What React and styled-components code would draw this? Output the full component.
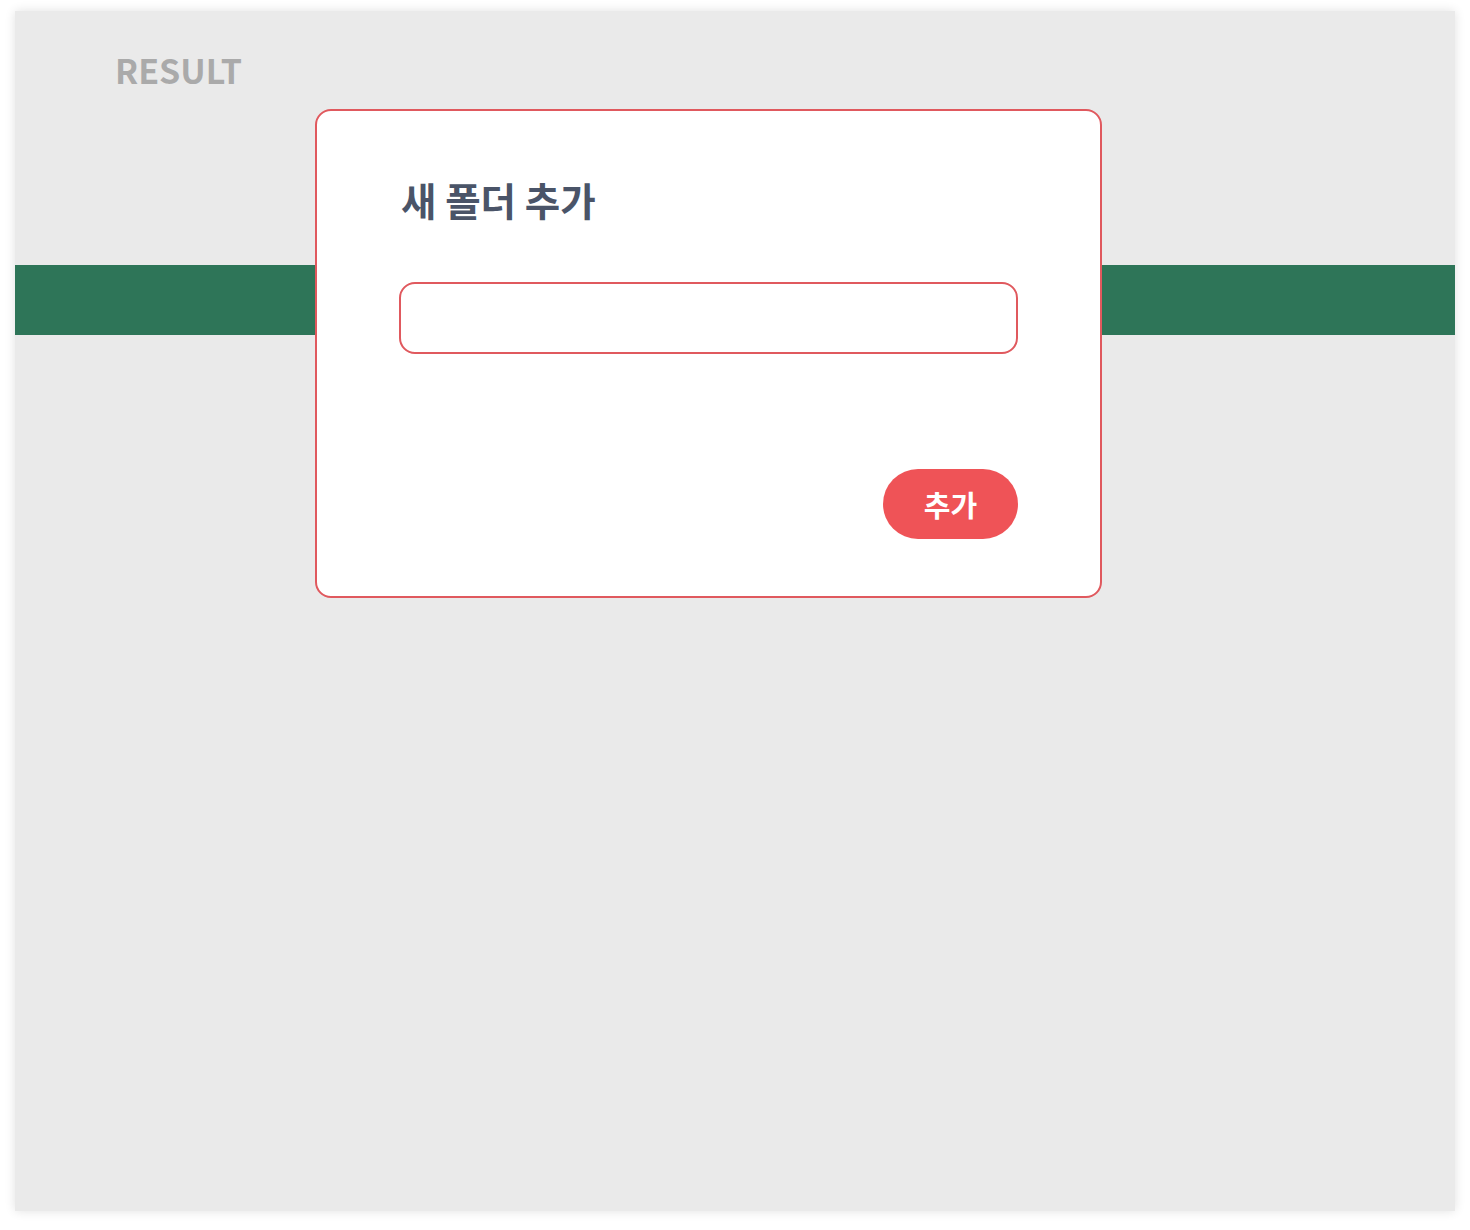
import React from "react";
import styled, { createGlobalStyle } from "styled-components";

const GlobalStyle = createGlobalStyle`
  * {
    box-sizing: border-box;
  }

  body {
    margin: 0;
    padding: 11px 15px;
    background: #ffffff;
    font-family: "Noto Sans CJK KR", "Noto Sans", sans-serif;
  }
`;

const ResultPanel = styled.section`
  position: relative;
  width: 1440px;
  height: 1200px;
  background: #eaeaea;
  box-shadow: 0 0 10px rgba(0, 0, 0, 0.12);
`;

const PanelHeader = styled.header`
  height: 254px;
  padding: 38px 0 0 100px;
`;

const ResultTitle = styled.h1`
  margin: 0;
  font-size: 34px;
  font-weight: 600;
  line-height: 42px;
  color: #aaaaaa;
`;

const GreenBar = styled.div`
  height: 70px;
  background: #2e7558;
`;

const Modal = styled.div`
  position: absolute;
  left: 300px;
  top: 98px;
  width: 787px;
  height: 489px;
  padding: 62px 82px 0 82px;
  background: #ffffff;
  border: 2px solid #e0595e;
  border-radius: 16px;
  display: flex;
  flex-direction: column;
`;

const ModalTitle = styled.h2`
  margin: 0 0 2px 2px;
  font-size: 38.5px;
  font-weight: 700;
  line-height: 52px;
  color: #4a5468;
`;

const NameInput = styled.input`
  margin-top: 55px;
  width: 619px;
  height: 72px;
  padding: 0 20px;
  border: 2px solid #e0595e;
  border-radius: 16px;
  outline: none;
  font-family: inherit;
  font-size: 24px;
  color: #4a5468;
  background: #ffffff;
`;

const Actions = styled.div`
  margin-top: 115px;
  width: 619px;
  display: flex;
  justify-content: flex-end;
`;

const AddButton = styled.button`
  width: 135px;
  height: 70px;
  border: none;
  border-radius: 35px;
  background: #ef5357;
  color: #ffffff;
  font-family: inherit;
  font-size: 29px;
  font-weight: 700;
  cursor: pointer;
`;

const App = () => {
  return (
    <>
      <GlobalStyle />
      <ResultPanel>
        <PanelHeader>
          <ResultTitle>RESULT</ResultTitle>
        </PanelHeader>
        <GreenBar />
        <Modal>
          <ModalTitle>새 폴더 추가</ModalTitle>
          <NameInput type="text" />
          <Actions>
            <AddButton>추가</AddButton>
          </Actions>
        </Modal>
      </ResultPanel>
    </>
  );
};

export default App;
